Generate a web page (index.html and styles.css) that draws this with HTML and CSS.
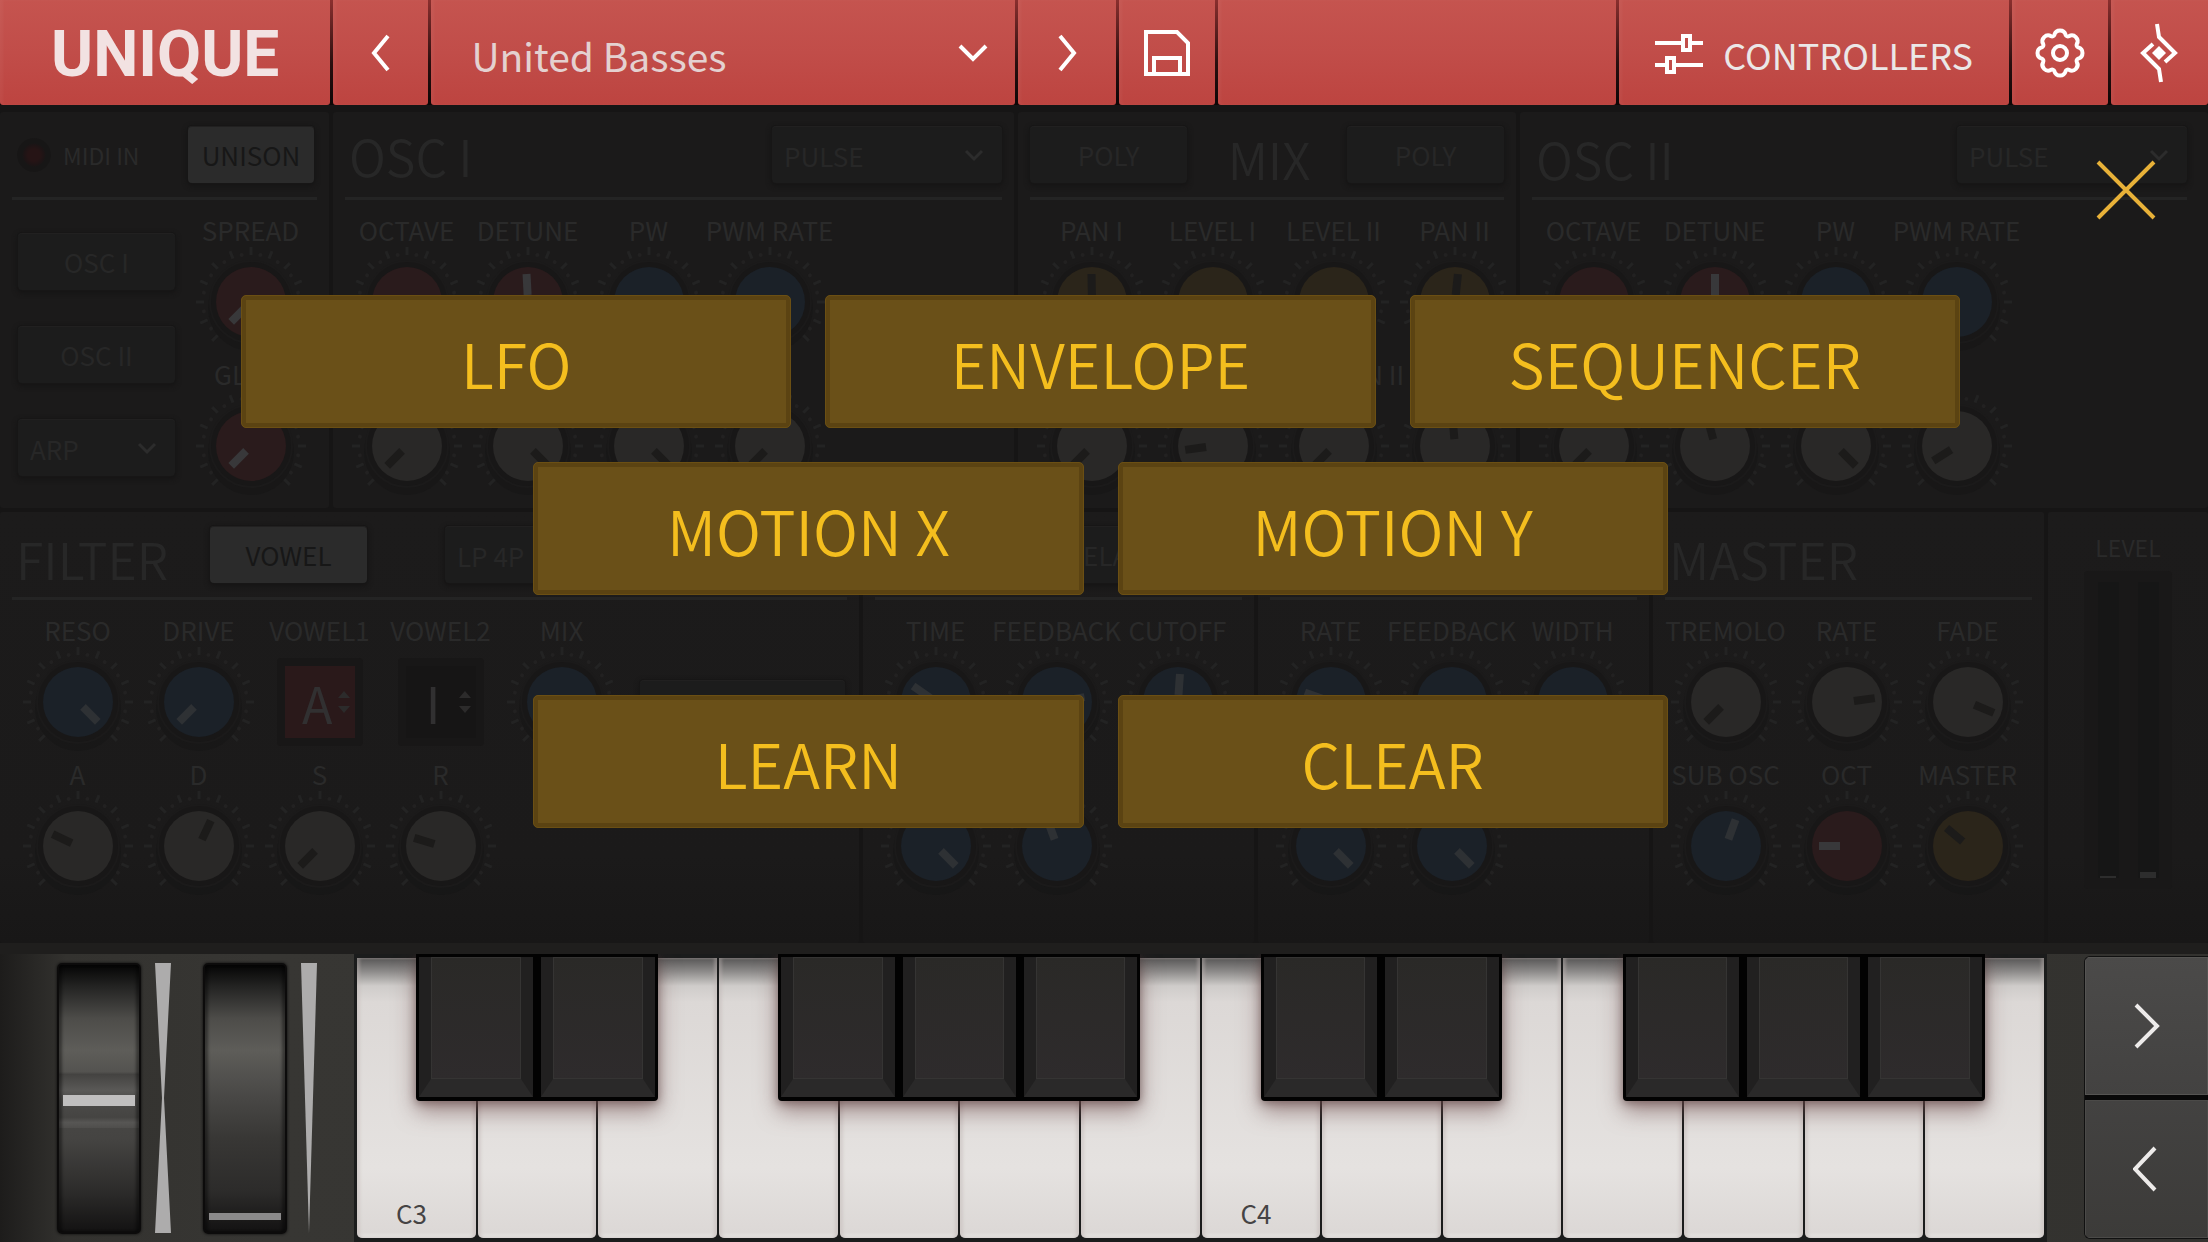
FILE: index.html
```html
<!DOCTYPE html>
<html lang="en">
<head>
    <meta charset="UTF-8">
    <meta name="viewport" content="width=device-width, initial-scale=1.0">
    <title>Unique Synthesizer</title>
    <link rel="stylesheet" href="styles.css">
</head>
<body>
    <header class="topbar">
        <div class="bar-cell logo">UNIQUE</div>
        <button class="bar-cell" aria-label="Previous preset">
            <svg width="22" height="38" viewBox="0 0 22 38"><path d="M18 2 L4 19 L18 36"/></svg>
        </button>
        <div class="bar-cell preset">
            <select aria-label="Preset">
                <option>United Basses</option>
            </select>
            <svg class="preset-arrow" width="32" height="20" viewBox="0 0 32 20"><path d="M3 3 L16 16 L29 3"/></svg>
        </div>
        <button class="bar-cell" aria-label="Next preset">
            <svg width="22" height="38" viewBox="0 0 22 38"><path d="M4 2 L18 19 L4 36"/></svg>
        </button>
        <button class="bar-cell" aria-label="Save preset">
            <svg width="48" height="48" viewBox="0 0 48 48"><path d="M3 3 H34 L45 14 V45 H3 Z M11 45 V29 H37 V45"/></svg>
        </button>
        <div class="bar-cell"></div>
        <button class="bar-cell controllers">
            <svg width="48" height="42" viewBox="0 0 48 42"><path d="M0 10 H27 M37 10 H48 M0 32 H11 M21 32 H48 M28 3 H35 V17 H28 Z M12 25 H19 V39 H12 Z"/></svg>
            CONTROLLERS
        </button>
        <button class="bar-cell" aria-label="Settings">
            <svg width="52" height="52" viewBox="-26 -26 52 52">
                <path d="M-5.6 -18.2 A5.8 5.8 0 0 1 5.6 -18.2 A2.4 2.4 0 0 0 8.9 -16.8 A5.8 5.8 0 0 1 16.8 -8.9 A2.4 2.4 0 0 0 18.2 -5.6 A5.8 5.8 0 0 1 18.2 5.6 A2.4 2.4 0 0 0 16.8 8.9 A5.8 5.8 0 0 1 8.9 16.8 A2.4 2.4 0 0 0 5.6 18.2 A5.8 5.8 0 0 1 -5.6 18.2 A2.4 2.4 0 0 0 -8.9 16.8 A5.8 5.8 0 0 1 -16.8 8.9 A2.4 2.4 0 0 0 -18.2 5.6 A5.8 5.8 0 0 1 -18.2 -5.6 A2.4 2.4 0 0 0 -16.8 -8.9 A5.8 5.8 0 0 1 -8.9 -16.8 A2.4 2.4 0 0 0 -5.6 -18.2 Z"/>
                <circle r="7"/>
            </svg>
        </button>
        <button class="bar-cell" aria-label="Host app">
            <svg width="40" height="60" viewBox="0 0 40 60">
                <path d="M18 1 L20 14 L36 30 L26 39 M22 59 L20 46 L4 30 L14 21"/>
                <path class="solid" d="M20 23 L27 30 L20 37 L13 30 Z"/>
            </svg>
        </button>
    </header>

    <main class="synth">
        <div class="row row-top">
            <section class="panel">
                <div class="panel-header">
                    <div class="midi"><span class="led"></span>MIDI IN</div>
                    <button class="pad on unison">UNISON</button>
                </div>
                <div class="voice">
                    <div class="voice-buttons">
                        <button class="pad">OSC I</button>
                        <button class="pad">OSC II</button>
                        <div class="dropdown">
                            <select class="pad" aria-label="Arpeggiator"><option>ARP</option></select>
                        </div>
                    </div>
                    <div class="knobs">
                        <label class="knob red"><span>SPREAD</span><input type="range" min="-135" max="135" value="-135"></label>
                        <label class="knob red"><span>GLIDE</span><input type="range" min="-135" max="135" value="-135"></label>
                    </div>
                </div>
            </section>

            <section class="panel">
                <div class="panel-header">
                    <h2 class="high">OSC I</h2>
                    <div class="dropdown wide">
                        <select class="pad" aria-label="Oscillator 1 wave"><option>PULSE</option></select>
                    </div>
                </div>
                <div class="knobs four">
                    <label class="knob red"><span>OCTAVE</span><input type="range" min="-135" max="135" value="-135"></label>
                    <label class="knob red"><span>DETUNE</span><input type="range" min="-135" max="135" value="-3"></label>
                    <label class="knob blue"><span>PW</span><input type="range" min="-135" max="135" value="-135"></label>
                    <label class="knob blue"><span>PWM RATE</span><input type="range" min="-135" max="135" value="-135"></label>
                    <label class="knob grey"><span></span><input type="range" min="-135" max="135" value="-135"></label>
                    <label class="knob grey"><span></span><input type="range" min="-135" max="135" value="135"></label>
                    <label class="knob grey"><span></span><input type="range" min="-135" max="135" value="135"></label>
                    <label class="knob grey"><span></span><input type="range" min="-135" max="135" value="-135"></label>
                </div>
            </section>

            <section class="panel">
                <div class="panel-header">
                    <button class="pad">POLY</button>
                    <h2>MIX</h2>
                    <button class="pad">POLY</button>
                </div>
                <div class="knobs four">
                    <label class="knob yellow"><span>PAN I</span><input type="range" min="-135" max="135" value="-1"></label>
                    <label class="knob yellow"><span>LEVEL I</span><input type="range" min="-135" max="135" value="135"></label>
                    <label class="knob yellow"><span>LEVEL II</span><input type="range" min="-135" max="135" value="135"></label>
                    <label class="knob yellow"><span>PAN II</span><input type="range" min="-135" max="135" value="6"></label>
                    <label class="knob grey"><span></span><input type="range" min="-135" max="135" value="-135"></label>
                    <label class="knob grey"><span></span><input type="range" min="-135" max="135" value="-98"></label>
                    <label class="knob grey"><span>POSITION II</span><input type="range" min="-135" max="135" value="-135"></label>
                    <label class="knob grey"><span></span><input type="range" min="-135" max="135" value="-5"></label>
                </div>
            </section>

            <section class="panel panel-last">
                <div class="panel-header">
                    <h2>OSC II</h2>
                    <div class="dropdown wide">
                        <select class="pad" aria-label="Oscillator 2 wave"><option>PULSE</option></select>
                    </div>
                </div>
                <div class="knobs four">
                    <label class="knob red"><span>OCTAVE</span><input type="range" min="-135" max="135" value="-135"></label>
                    <label class="knob red"><span>DETUNE</span><input type="range" min="-135" max="135" value="0"></label>
                    <label class="knob blue"><span>PW</span><input type="range" min="-135" max="135" value="-135"></label>
                    <label class="knob blue"><span>PWM RATE</span><input type="range" min="-135" max="135" value="-135"></label>
                    <label class="knob grey"><span></span><input type="range" min="-135" max="135" value="-135"></label>
                    <label class="knob grey"><span></span><input type="range" min="-135" max="135" value="-15"></label>
                    <label class="knob grey"><span></span><input type="range" min="-135" max="135" value="135"></label>
                    <label class="knob grey"><span></span><input type="range" min="-135" max="135" value="-122"></label>
                </div>
            </section>
        </div>

        <div class="row row-bottom">
            <section class="panel">
                <div class="panel-header filter-header">
                    <h2>FILTER</h2>
                    <button class="pad on">VOWEL</button>
                    <div class="dropdown wide">
                        <select class="pad" aria-label="Filter type"><option>LP 4P</option></select>
                    </div>
                </div>
                <div class="knobs five">
                    <label class="knob blue"><span>RESO</span><input type="range" min="-135" max="135" value="135"></label>
                    <label class="knob blue"><span>DRIVE</span><input type="range" min="-135" max="135" value="-135"></label>
                    <div class="vowel">
                        <span>VOWEL1</span>
                        <button class="vowel-box red">A<svg width="12" height="24" viewBox="0 0 12 24"><path d="M0 8 L6 1 L12 8 Z M0 16 L6 23 L12 16 Z"/></svg></button>
                    </div>
                    <div class="vowel">
                        <span>VOWEL2</span>
                        <button class="vowel-box">I<svg width="12" height="24" viewBox="0 0 12 24"><path d="M0 8 L6 1 L12 8 Z M0 16 L6 23 L12 16 Z"/></svg></button>
                    </div>
                    <label class="knob blue"><span>MIX</span><input type="range" min="-135" max="135" value="135"></label>
                    <button class="pad filter-extra" aria-label="Filter envelope"></button>
                    <label class="knob grey"><span>A</span><input type="range" min="-135" max="135" value="-65"></label>
                    <label class="knob grey"><span>D</span><input type="range" min="-135" max="135" value="25"></label>
                    <label class="knob grey"><span>S</span><input type="range" min="-135" max="135" value="-135"></label>
                    <label class="knob grey"><span>R</span><input type="range" min="-135" max="135" value="-73"></label>
                </div>
            </section>

            <section class="panel">
                <div class="panel-header delay-header">
                    <button class="pad">DELAY</button>
                </div>
                <div class="knobs three">
                    <label class="knob blue"><span>TIME</span><input type="range" min="-135" max="135" value="-55"></label>
                    <label class="knob blue"><span>FEEDBACK</span><input type="range" min="-135" max="135" value="80"></label>
                    <label class="knob blue"><span>CUTOFF</span><input type="range" min="-135" max="135" value="4"></label>
                    <label class="knob blue"><span></span><input type="range" min="-135" max="135" value="135"></label>
                    <label class="knob blue"><span></span><input type="range" min="-135" max="135" value="-20"></label>
                </div>
            </section>

            <section class="panel">
                <div class="panel-header"></div>
                <div class="knobs three">
                    <label class="knob blue"><span>RATE</span><input type="range" min="-135" max="135" value="-70"></label>
                    <label class="knob blue"><span>FEEDBACK</span><input type="range" min="-135" max="135" value="-135"></label>
                    <label class="knob blue"><span>WIDTH</span><input type="range" min="-135" max="135" value="-135"></label>
                    <label class="knob blue"><span></span><input type="range" min="-135" max="135" value="135"></label>
                    <label class="knob blue"><span></span><input type="range" min="-135" max="135" value="135"></label>
                </div>
            </section>

            <section class="panel">
                <div class="panel-header">
                    <h2>MASTER</h2>
                </div>
                <div class="knobs three">
                    <label class="knob grey"><span>TREMOLO</span><input type="range" min="-135" max="135" value="-135"></label>
                    <label class="knob grey"><span>RATE</span><input type="range" min="-135" max="135" value="82"></label>
                    <label class="knob grey"><span>FADE</span><input type="range" min="-135" max="135" value="113"></label>
                    <label class="knob blue"><span>SUB OSC</span><input type="range" min="-135" max="135" value="20"></label>
                    <label class="knob red"><span>OCT</span><input type="range" min="-135" max="135" value="-90"></label>
                    <label class="knob yellow"><span>MASTER</span><input type="range" min="-135" max="135" value="-50"></label>
                </div>
            </section>

            <section class="panel level">
                <p>LEVEL</p>
                <div class="meter">
                    <div class="channel"><div class="peak" style="height: 2px"></div></div>
                    <div class="channel"><div class="peak" style="height: 6px"></div></div>
                </div>
            </section>
        </div>

        <div class="overlay">
            <div class="choices">
                <button class="choice">LFO</button>
                <button class="choice">ENVELOPE</button>
                <button class="choice">SEQUENCER</button>
            </div>
            <div class="choices">
                <button class="choice">MOTION X</button>
                <button class="choice">MOTION Y</button>
            </div>
            <div class="choices actions">
                <button class="choice">LEARN</button>
                <button class="choice">CLEAR</button>
            </div>
            <button class="close" aria-label="Close">
                <svg width="60" height="60" viewBox="0 0 60 60"><path d="M2 2 L58 58 M58 2 L2 58"/></svg>
            </button>
        </div>
    </main>

    <footer class="keyboard">
        <div class="wheels">
            <input class="wheel pitch" type="range" aria-label="Pitch bend" value="49">
            <svg class="scale" width="16" height="270" viewBox="0 0 16 270"><path d="M0 0 H16 L9 135 L16 270 H0 L7 135 Z"/></svg>
            <input class="wheel mod" type="range" aria-label="Modulation" value="0">
            <svg class="scale" width="16" height="270" viewBox="0 0 16 270"><path d="M0 0 H16 L8 270 Z"/></svg>
        </div>
        <div class="keys">
            <div class="whites">
                <button class="white">C3</button>
                <button class="white" aria-label="D3"></button>
                <button class="white" aria-label="E3"></button>
                <button class="white" aria-label="F3"></button>
                <button class="white" aria-label="G3"></button>
                <button class="white" aria-label="A3"></button>
                <button class="white" aria-label="B3"></button>
                <button class="white">C4</button>
                <button class="white" aria-label="D4"></button>
                <button class="white" aria-label="E4"></button>
                <button class="white" aria-label="F4"></button>
                <button class="white" aria-label="G4"></button>
                <button class="white" aria-label="A4"></button>
                <button class="white" aria-label="B4"></button>
            </div>
            <div class="blacks">
                <div class="group group-1">
                    <button class="black" aria-label="C#3"></button>
                    <button class="black" aria-label="D#3"></button>
                </div>
                <div class="group group-2">
                    <button class="black" aria-label="F#3"></button>
                    <button class="black" aria-label="G#3"></button>
                    <button class="black" aria-label="A#3"></button>
                </div>
                <div class="group group-3">
                    <button class="black" aria-label="C#4"></button>
                    <button class="black" aria-label="D#4"></button>
                </div>
                <div class="group group-4">
                    <button class="black" aria-label="F#4"></button>
                    <button class="black" aria-label="G#4"></button>
                    <button class="black" aria-label="A#4"></button>
                </div>
            </div>
        </div>
        <div class="octaves">
            <button class="octave" aria-label="Octave up">
                <svg width="28" height="48" viewBox="0 0 28 48"><path d="M3 3 L24 24 L3 45"/></svg>
            </button>
            <button class="octave" aria-label="Octave down">
                <svg width="28" height="48" viewBox="0 0 28 48"><path d="M22 3 L2 24 L22 45"/></svg>
            </button>
        </div>
    </footer>

    <script src="main.js"></script>
</body>
</html>
```
FILE: styles.css
```css
* {
    box-sizing: border-box;
}
body {
    margin: 0;
    min-height: 100vh;
    display: flex;
    flex-direction: column;
    background-color: #151414;
    font-family: "Noto Sans CJK SC", "Noto Sans", sans-serif;
    font-size: 26px;
    line-height: 30px;
    color: #2a2a2a;
}
button, select {
    border: none;
    margin: 0;
    padding: 0;
    background: none;
    font: inherit;
    color: inherit;
    cursor: pointer;
    appearance: none;
}

/* top bar */
.topbar {
    height: 105px;
    display: grid;
    grid-template-columns: 330fr 95fr 583fr 98fr 96fr 398fr 389fr 96fr 97fr;
    column-gap: 3px;
    background: linear-gradient(#8a2f2e, #2a0f0f 60%, #0c0606);
}
.bar-cell {
    display: flex;
    align-items: center;
    justify-content: center;
    background: linear-gradient(#c5544f, #c14d49 50%, #bd4440);
    box-shadow: inset 3px 0 3px rgba(255, 255, 255, 0.04);
    border-radius: 0 0 3px 3px;
}
.bar-cell svg {
    fill: none;
    stroke: #fff;
    stroke-width: 4;
}
.bar-cell svg .solid {
    fill: #fff;
    stroke: none;
}
.logo {
    padding-top: 4px;
    font-family: Roboto, sans-serif;
    font-weight: 700;
    font-size: 64px;
    line-height: 64px;
    color: #f2e2e2;
}
.preset {
    position: relative;
}
.preset select {
    width: 100%;
    height: 100%;
    padding: 4px 80px 0 40px;
    font-size: 39px;
    line-height: 60px;
    color: #e4d1d0;
}
.preset-arrow {
    position: absolute;
    right: 26px;
    pointer-events: none;
}
.controllers {
    gap: 20px;
    padding-top: 2px;
    font-size: 36px;
    color: #ebe7e7;
}

/* synth panels */
.synth {
    position: relative;
    display: grid;
    gap: 4px;
    padding-top: 7px;
    background-color: #161515;
}
.row {
    display: grid;
    gap: 4px;
}
.row-top {
    grid-template-columns: 329fr 681fr 498fr 688fr;
}
.row-bottom {
    grid-template-columns: 859fr 391fr 391fr 391fr 160fr;
}
.panel {
    min-width: 0;
    padding: 14px 12px 7px;
    background-color: #1b1a1a;
    border-radius: 3px;
}
.panel-last {
    padding-right: 21px;
}
.row-bottom .panel {
    padding-bottom: 42px;
    background: linear-gradient(#1c1b1b, #1b1a1a 80%, #181717);
}
.panel-header {
    display: flex;
    justify-content: space-between;
    align-items: center;
    height: 74px;
    padding-bottom: 14px;
    border-bottom: 3px solid #242424;
}
.panel-header h2 {
    margin: 0;
    padding: 6px 0 0 4px;
    font-size: 50px;
    line-height: 50px;
    font-weight: 350;
    color: #272727;
}
.panel-header h2.high {
    padding-top: 0;
}
.pad {
    width: 157px;
    height: 57px;
    border-radius: 4px;
    background-color: #1c1c1c;
    box-shadow: 0 0 0 1px #171616, 0 2px 5px 1px #151414, inset 0 1px 0 #212020;
    color: #272727;
}
.pad.on {
    background-color: #2b2b2b;
    color: #171717;
}
.unison {
    width: 126px;
    margin-right: 3px;
}
.dropdown {
    position: relative;
    height: 57px;
}
.dropdown select {
    padding: 2px 0 0 12px;
}
.dropdown.wide select {
    width: 230px;
}
.dropdown svg {
    position: absolute;
    right: 18px;
    top: 23px;
    fill: none;
    stroke: #2c2c2c;
    stroke-width: 3;
    pointer-events: none;
}
.midi {
    display: flex;
    align-items: center;
    gap: 12px;
    padding-left: 5px;
    font-size: 23px;
}
.led {
    width: 34px;
    height: 34px;
    border-radius: 50%;
    background: radial-gradient(circle, #261415 0 6px, #1d1415 10px, #171616 12px);
}
.voice {
    display: flex;
    gap: 15px;
    padding-left: 6px;
}
.voice-buttons {
    display: flex;
    flex-direction: column;
    gap: 36px;
    padding-top: 33px;
}
.filter-header {
    justify-content: flex-start;
}
.filter-header h2 {
    width: 198px;
}
.filter-header .dropdown {
    margin-left: 78px;
}
.delay-header {
    justify-content: flex-end;
    padding-right: 60px;
}

/* knobs */
.knobs {
    display: grid;
    grid-template-columns: 121px;
    row-gap: 2px;
    padding-top: 15px;
}
.knobs.three {
    grid-template-columns: repeat(3, 121px);
}
.knobs.four {
    grid-template-columns: repeat(4, 121px);
    padding-left: 1px;
}
.knobs.five {
    grid-template-columns: repeat(5, 121px) 1fr;
    padding-left: 5px;
}
.knob, .vowel {
    position: relative;
    display: flex;
    flex-direction: column;
    align-items: center;
    gap: 2px;
    height: 142px;
}
.knob span, .vowel span {
    height: 30px;
    white-space: nowrap;
}
.knob input {
    position: absolute;
    top: 32px;
    width: 110px;
    height: 110px;
    margin: 0;
    opacity: 0;
    cursor: pointer;
}
.dial {
    width: 110px;
    height: 110px;
    flex: none;
    overflow: visible;
}
.dial .tick {
    stroke: #232323;
    stroke-width: 3;
}
.dial .dot {
    fill: #222121;
}
.dial .shadow {
    fill: #151414;
    opacity: 0.4;
}
.dial .ring {
    fill: #181717;
    stroke: #1b1a1a;
    stroke-width: 2;
}
.dial .pointer {
    stroke: #38383a;
    stroke-width: 8;
}
.knob.red .cap {
    fill: #2a1b1c;
}
.knob.blue .cap {
    fill: #1b2128;
}
.knob.blue .pointer {
    stroke: #2e3134;
}
.knob.yellow .cap {
    fill: #2b251a;
}
.knob.grey .cap {
    fill: #292827;
}
.knob.grey .pointer, .knob.yellow .pointer {
    stroke: #1c1b1a;
}
.vowel-box {
    display: flex;
    align-items: center;
    justify-content: flex-end;
    gap: 5px;
    width: 86px;
    height: 88px;
    margin-top: 11px;
    padding-right: 5px;
    border: 8px solid #181717;
    border-radius: 4px;
    background-color: #161515;
    color: #313031;
    font-size: 50px;
    line-height: 50px;
}
.vowel-box.red {
    background-color: #2a191a;
}
.vowel-box:not(.red) {
    gap: 18px;
}
.vowel-box svg {
    fill: #2c2b2b;
}
.filter-extra {
    width: auto;
    margin: 65px 2px 0 18px;
}
.row-bottom .level {
    padding: 20px 0 54px;
    display: flex;
    flex-direction: column;
    align-items: center;
}
.level p {
    margin: 0 0 9px;
    font-size: 23px;
}
.meter {
    flex: 1;
    display: flex;
    justify-content: center;
    gap: 19px;
    width: 88px;
    padding: 11px 0;
    border-radius: 4px;
    background-color: #191818;
}
.channel {
    display: flex;
    align-items: flex-end;
    justify-content: center;
    width: 21px;
    background-color: #161616;
}
.peak {
    width: 16px;
    background-color: #2d2d2d;
}

/* overlay */
.overlay {
    position: absolute;
    inset: 0;
    display: flex;
    flex-direction: column;
    gap: 34px;
    padding: 190px 7px 0 0;
}
.choices {
    display: flex;
    justify-content: center;
    gap: 34px;
}
.actions {
    margin-top: 66px;
}
.choice {
    width: 25%;
    height: 133px;
    padding-top: 2px;
    border: 1px solid #6b4f13;
    border-radius: 5px;
    background-color: #6a5018;
    box-shadow: inset 0 0 0 4px #5b4312;
    color: #f4be1e;
    font-size: 61px;
    font-weight: 350;
    line-height: 64px;
}
.close {
    position: absolute;
    top: 55px;
    right: 52px;
    height: 60px;
}
.close svg {
    display: block;
    stroke: #e8b138;
    stroke-width: 4;
}

/* keyboard */
.keyboard {
    flex: 1;
    display: grid;
    grid-template-columns: 354fr 1693fr 161fr;
    border-top: 11px solid #1f1e1d;
    background: linear-gradient(90deg, #1d1c1b, #33322f 3%, #373633 12%, #33322f);
}
.wheels {
    display: flex;
    justify-content: center;
    gap: 14px;
    padding: 9px 0 8px 19px;
}
.wheel {
    appearance: none;
    writing-mode: vertical-lr;
    direction: rtl;
    width: 84px;
    height: 271px;
    margin: 0;
    padding: 12px 5px;
    border: 2px solid #0c0b0b;
    border-radius: 5px;
    background: linear-gradient(#050505, #232322 8%, #4d4c49 20%, #5e5d59 32%, #4a4947 48%, #383735 65%, #2c2b2a 85%, #131212);
    box-shadow: 0 0 3px #0a0a0a, inset 3px 0 3px rgba(0, 0, 0, 0.4), inset -3px 0 3px rgba(0, 0, 0, 0.4);
}
.wheel.pitch {
    background: linear-gradient(transparent 40%, #444341 41%, #5a5957 47%, #4c4b49 51%, #454442 57%, #575654 59%, #4f4e4c 61%, transparent 61%), linear-gradient(#050505, #232322 8%, #4d4c49 20%, #5e5d59 32%, #4a4947 48%, #454442 65%, #2c2b2a 85%, #131212);
}
.wheel.mod {
    margin-left: 18px;
}
.wheel::-webkit-slider-thumb {
    appearance: none;
    width: 72px;
    height: 11px;
    background-color: #c0bfbf;
}
.wheel.mod::-webkit-slider-thumb {
    height: 7px;
    background-color: #8b8a8a;
}
.scale {
    fill: #adacac;
}
.keys {
    display: grid;
    padding: 0 2px;
    background-color: #1b1c1c;
}
/* both layers share the one grid cell, the black keys on top */
.whites, .blacks {
    grid-area: 1 / 1;
    display: grid;
}
.whites {
    grid-template-columns: repeat(14, 1fr);
}
.blacks {
    grid-template-columns: repeat(28, 1fr);
    align-items: start;
    pointer-events: none;
}
.white {
    display: flex;
    align-items: flex-end;
    margin: 4px 1px;
    padding: 0 0 10px 39px;
    border-radius: 0 0 5px 5px;
    background: linear-gradient(#575656, #8f8d8c 14px, #cfccca 28px, #dcd8d6 44px, #e5e2e0 75%, #dcd8d6 98%, #e8e6e5);
    box-shadow: inset 3px 0 3px rgba(190, 180, 178, 0.4), inset -3px 0 3px rgba(190, 180, 178, 0.4);
    color: #454344;
}
.group {
    display: grid;
    grid-auto-flow: column;
    grid-auto-columns: 1fr;
    gap: 8px;
    height: 147px;
    padding: 3px 3px 4px;
    background-color: #020202;
    border-radius: 0 0 4px 4px;
    box-shadow: 0 10px 22px rgba(110, 75, 75, 0.6), 0 2px 8px rgba(60, 40, 40, 0.5);
    clip-path: inset(0 -30px -50px -30px);
    pointer-events: auto;
}
.group-1 {
    grid-column: 2 / 6;
}
.group-2 {
    grid-column: 8 / 14;
}
.group-3 {
    grid-column: 16 / 20;
}
.group-4 {
    grid-column: 22 / 28;
}
.black {
    border-style: solid;
    border-width: 0 12px 18px;
    border-color: transparent #212020 #2a2929;
    background: linear-gradient(#2a2927, #2e2b2c) padding-box;
    box-shadow: inset 0 0 0 1px #353433;
}
.octaves {
    display: grid;
    grid-template-rows: 1fr 1fr;
    gap: 5px;
    margin: 3px 0 4px 38px;
    border-radius: 5px 0 0 5px;
    background-color: #080808;
    box-shadow: 0 0 0 1px #111;
    overflow: hidden;
}
.octave {
    display: flex;
    align-items: center;
    justify-content: center;
    background: linear-gradient(#4b4a49, #434241);
    box-shadow: inset 0 0 0 1px #555452;
}
.octave + .octave {
    background: linear-gradient(#434241, #3c3b39);
    box-shadow: inset 0 0 0 1px #4b4a48;
}
.octave svg {
    fill: none;
    stroke: #edebea;
    stroke-width: 4;
}
```
FILE: main.js
```js
const SVG_NS = 'http://www.w3.org/2000/svg';

function dialMarkup(angle) {
    let marks = '';
    // long ticks every 22.5 degrees with a small dot halfway between them
    for (let a = -135; a <= 135; a += 22.5) {
        marks += `<line class="tick" y1="-47" y2="-55" transform="rotate(${a})"/>`;
        if (a < 135) {
            marks += `<circle class="dot" cy="-48" r="2" transform="rotate(${a + 11.25})"/>`;
        }
    }
    return marks +
        '<circle class="shadow" cy="6" r="43"/>' +
        '<circle class="ring" r="41"/>' +
        '<circle class="cap" r="35"/>' +
        `<line class="pointer" y1="-7" y2="-28" transform="rotate(${angle})"/>`;
}

document.querySelectorAll('.knob').forEach(knob => {
    const input = knob.querySelector('input');
    const svg = document.createElementNS(SVG_NS, 'svg');
    svg.setAttribute('class', 'dial');
    svg.setAttribute('viewBox', '-55 -55 110 110');
    svg.innerHTML = dialMarkup(input.value);
    knob.insertBefore(svg, input);
    input.addEventListener('input', () => {
        svg.innerHTML = dialMarkup(input.value);
    });
});

document.querySelectorAll('.dropdown').forEach(dropdown => {
    const svg = document.createElementNS(SVG_NS, 'svg');
    svg.setAttribute('width', '20');
    svg.setAttribute('height', '14');
    svg.innerHTML = '<path d="M2 2 L10 10 L18 2"/>';
    dropdown.append(svg);
});

document.querySelector('.close').addEventListener('click', () => {
    document.querySelector('.overlay').style.display = 'none';
});
```
